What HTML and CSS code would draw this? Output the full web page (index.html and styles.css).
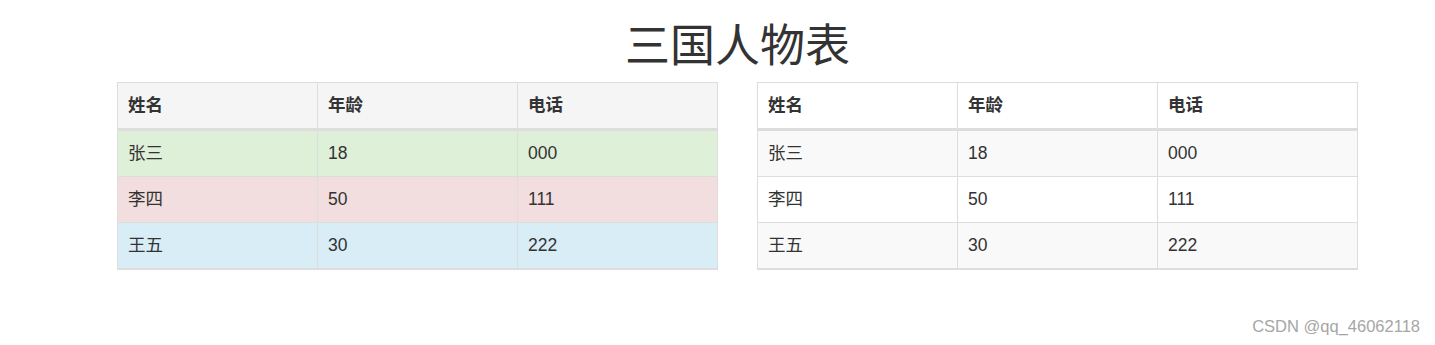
FILE: index.html
```html
<!DOCTYPE html>
<html lang="zh">
<head>
<meta charset="utf-8">
<title>三国人物表</title>
<link rel="stylesheet" href="styles.css">
</head>
<body>
<h1 class="title">三国人物表</h1>
<div class="tables">
  <table class="table">
    <thead>
      <tr class="row-active"><th>姓名</th><th>年龄</th><th>电话</th></tr>
    </thead>
    <tbody>
      <tr class="row-success"><td>张三</td><td>18</td><td>000</td></tr>
      <tr class="row-danger"><td>李四</td><td>50</td><td>111</td></tr>
      <tr class="row-info"><td>王五</td><td>30</td><td>222</td></tr>
    </tbody>
  </table>
  <table class="table table-striped">
    <thead>
      <tr><th>姓名</th><th>年龄</th><th>电话</th></tr>
    </thead>
    <tbody>
      <tr><td>张三</td><td>18</td><td>000</td></tr>
      <tr><td>李四</td><td>50</td><td>111</td></tr>
      <tr><td>王五</td><td>30</td><td>222</td></tr>
    </tbody>
  </table>
</div>
<div class="watermark">CSDN @qq_46062118</div>
</body>
</html>
```
FILE: styles.css
```css
html, body {
  margin: 0;
  padding: 0;
  background: #fff;
}
body {
  font-family: "Liberation Sans", "Noto Sans CJK SC", sans-serif;
  font-size: 17.5px;
  line-height: 25px;
  color: #333;
  position: relative;
  height: 345px;
  overflow: hidden;
}
.title {
  margin: 18px 0 14px;
  padding-left: 40px;
  font-family: "Noto Sans CJK SC", sans-serif;
  font-size: 45px;
  line-height: 50px;
  font-weight: 400;
  text-align: center;
  color: #333;
}
.tables {
  display: flex;
  gap: 39px;
  margin-left: 117px;
  width: 1241px;
}
.table {
  width: 601px;
  table-layout: fixed;
  border-collapse: collapse;
  border: 1px solid #ddd;
  border-bottom-width: 2px;
}
.table th,
.table td {
  padding: 10px;
  border: 1px solid #ddd;
  text-align: left;
  vertical-align: top;
  line-height: 25px;
}
.table th {
  font-weight: bold;
  border-bottom: 3px solid #ddd;
}
.row-active th { background: #f5f5f5; }
.row-success td { background: #dff0d8; }
.row-danger td { background: #f2dede; }
.row-info td { background: #d9edf7; }
.table-striped tbody tr:nth-child(odd) td { background: #f9f9f9; }
.watermark {
  position: absolute;
  right: 15px;
  top: 316px;
  font-family: "Liberation Sans", sans-serif;
  font-size: 16.5px;
  line-height: 20px;
  color: #a6a6a6;
}
```
